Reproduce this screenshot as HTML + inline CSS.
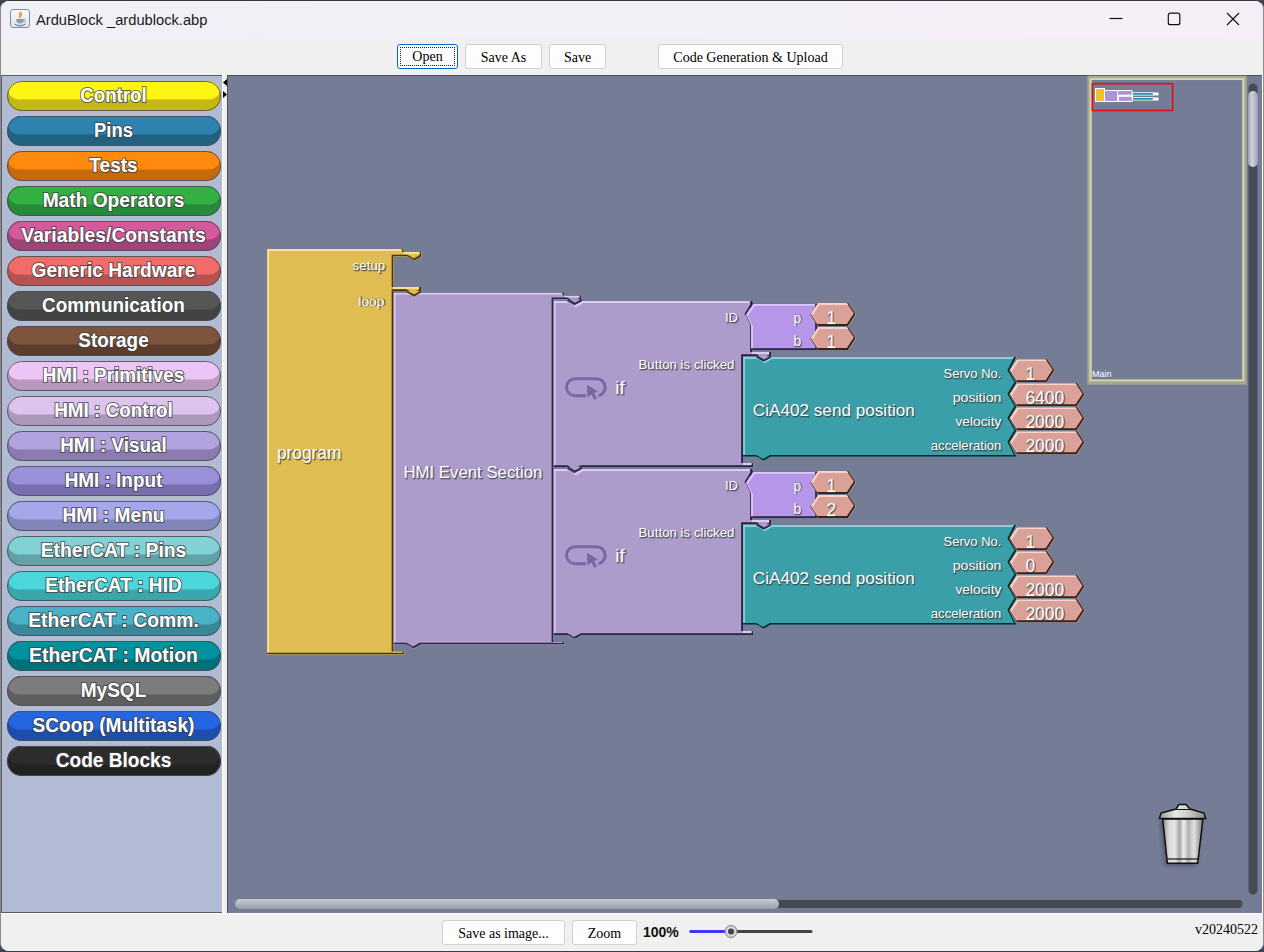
<!DOCTYPE html>
<html><head><meta charset="utf-8">
<style>
html,body{margin:0;padding:0;width:1264px;height:952px;overflow:hidden;background:#3e4453;}
*{box-sizing:border-box;}
.abs{position:absolute;}
.btn{position:absolute;background:#fdfdfd;border:1px solid #d0d0d0;border-radius:3px;font-family:'Liberation Serif',serif;font-size:14px;color:#000;text-align:center;}
</style></head><body>
<div class="abs" style="left:0;top:0;width:1264px;height:952px;border-radius:9px;background:#f0f0f0;border:1px solid #8c8c90;border-top-color:#34373f;border-bottom-color:#3a3e48;overflow:hidden;">
</div>
<!-- title bar -->
<div class="abs" style="left:1px;top:1px;width:1262px;height:37px;background:linear-gradient(90deg,#f1f0f6,#f3eff7 60%,#f5eef7);border-radius:8px 8px 0 0;"></div>
<div class="abs" style="left:36px;top:10.7px;font-family:'Liberation Sans',sans-serif;font-size:14.7px;color:#1a1a1a;line-height:18px;">ArduBlock _ardublock.abp</div>
<!-- java icon -->
<div class="abs" style="left:10px;top:9px;width:20px;height:19px;border:1px solid #7890a8;border-radius:3px;background:linear-gradient(#fafafa,#e4e4e4);"></div>
<svg class="abs" style="left:10px;top:9px" width="20" height="19" viewBox="0 0 20 19">
<path d="M10.5,2.5 C7.5,5 10.5,6.5 8.5,9.5 C12.5,8.5 13,5.5 10.5,2.5Z" fill="#f08a30"/><path d="M10.3,4.5 C9.5,6 10.8,7 9.6,8.6 C11.5,7.8 11.6,6 10.3,4.5Z" fill="#f8c040"/>
<path d="M6,10 H14 C14,13 12,14.5 10,14.5 C8,14.5 6,13 6,10Z" fill="#8a9cb0"/><path d="M14,10.5 C16,10.5 16,13 13.5,13.2" fill="none" stroke="#8a9cb0" stroke-width="1"/>
<path d="M4.5,15 Q10,18.5 15.5,15" fill="none" stroke="#7890a0" stroke-width="1.3"/>
</svg>
<!-- window buttons -->
<svg class="abs" style="left:1100px;top:5px" width="150" height="30">
<path d="M9.5,13.5 H22.5" stroke="#111" stroke-width="1.2"/>
<rect x="68.3" y="8.2" width="11.5" height="11.5" rx="2" fill="none" stroke="#111" stroke-width="1.2"/>
<path d="M127,8 L139,20 M139,8 L127,20" stroke="#111" stroke-width="1.2"/>
</svg>
<!-- toolbar -->
<div class="abs" style="left:1px;top:38px;width:1262px;height:37px;background:#f0f0f0;"></div>
<div class="btn" style="left:397px;top:44px;width:61px;height:25px;border:1px solid #0a64c8;line-height:24px;"><div style="position:absolute;left:2px;top:2px;right:2px;bottom:2px;border:1px dotted #222;"></div>Open</div>
<div class="btn" style="left:465px;top:44px;width:77px;height:25px;line-height:25px;">Save As</div>
<div class="btn" style="left:549px;top:44px;width:57px;height:25px;line-height:25px;">Save</div>
<div class="btn" style="left:658px;top:44px;width:185px;height:25px;line-height:25px;">Code Generation &amp; Upload</div>
<!-- sidebar -->
<div class="abs" style="left:1px;top:75px;width:222px;height:838px;background:#b1bbd4;border:1px solid #5c5c5c;border-right-color:#6a6a6a;"></div>
<div class="abs" style="left:222px;top:75px;width:5px;height:838px;background:#f0f0f0;border-left:1px solid #fff;"></div>
<svg class="abs" style="left:222px;top:78px" width="6" height="22"><path d="M5,1 L1,4.5 L5,8 Z" fill="#000"/><path d="M1,13 L5,16.5 L1,20 Z" fill="#000"/></svg>
<!-- canvas -->
<div class="abs" style="left:227px;top:75px;width:1035px;height:838px;background:#747c96;border-top:1px solid #4a4e5a;border-left:1px solid #4a4e5a;"></div>
<div class="abs" style="left:1262px;top:75px;width:1px;height:838px;background:#fff;"></div>
<!-- bottom bar -->
<div class="abs" style="left:1px;top:913px;width:1262px;height:38px;background:#f0f0f0;border-top:1px solid #fff;border-radius:0 0 8px 8px;"></div>
<div class="btn" style="left:442px;top:920px;width:123px;height:25px;line-height:25px;">Save as image...</div>
<div class="btn" style="left:572px;top:920px;width:65px;height:25px;line-height:25px;">Zoom</div>
<div class="abs" style="left:643px;top:923px;font-family:'Liberation Sans',sans-serif;font-weight:bold;font-size:14px;line-height:18px;color:#111;">100%</div>
<svg class="abs" style="left:685px;top:920px" width="135" height="25">
<path d="M6,11.5 H126" stroke="#444" stroke-width="3" stroke-linecap="round"/>
<path d="M6,11.5 H45" stroke="#3a3aff" stroke-width="3" stroke-linecap="round"/>
<circle cx="46" cy="11.5" r="6" fill="#d8d8d8" stroke="#808080" stroke-width="1"/>
<circle cx="46" cy="11.5" r="3" fill="#444"/>
</svg>
<div class="abs" style="left:1195px;top:921.3px;font-family:'Liberation Serif',serif;font-size:14px;line-height:18px;color:#000;">v20240522</div>

<svg class="abs" style="left:0;top:0" width="1264" height="952">
<defs><clipPath id="cb0"><rect x="7" y="81" width="214" height="30" rx="14" ry="15"/></clipPath>
<clipPath id="cb1"><rect x="7" y="116" width="214" height="30" rx="14" ry="15"/></clipPath>
<clipPath id="cb2"><rect x="7" y="151" width="214" height="30" rx="14" ry="15"/></clipPath>
<clipPath id="cb3"><rect x="7" y="186" width="214" height="30" rx="14" ry="15"/></clipPath>
<clipPath id="cb4"><rect x="7" y="221" width="214" height="30" rx="14" ry="15"/></clipPath>
<clipPath id="cb5"><rect x="7" y="256" width="214" height="30" rx="14" ry="15"/></clipPath>
<clipPath id="cb6"><rect x="7" y="291" width="214" height="30" rx="14" ry="15"/></clipPath>
<clipPath id="cb7"><rect x="7" y="326" width="214" height="30" rx="14" ry="15"/></clipPath>
<clipPath id="cb8"><rect x="7" y="361" width="214" height="30" rx="14" ry="15"/></clipPath>
<clipPath id="cb9"><rect x="7" y="396" width="214" height="30" rx="14" ry="15"/></clipPath>
<clipPath id="cb10"><rect x="7" y="431" width="214" height="30" rx="14" ry="15"/></clipPath>
<clipPath id="cb11"><rect x="7" y="466" width="214" height="30" rx="14" ry="15"/></clipPath>
<clipPath id="cb12"><rect x="7" y="501" width="214" height="30" rx="14" ry="15"/></clipPath>
<clipPath id="cb13"><rect x="7" y="536" width="214" height="30" rx="14" ry="15"/></clipPath>
<clipPath id="cb14"><rect x="7" y="571" width="214" height="30" rx="14" ry="15"/></clipPath>
<clipPath id="cb15"><rect x="7" y="606" width="214" height="30" rx="14" ry="15"/></clipPath>
<clipPath id="cb16"><rect x="7" y="641" width="214" height="30" rx="14" ry="15"/></clipPath>
<clipPath id="cb17"><rect x="7" y="676" width="214" height="30" rx="14" ry="15"/></clipPath>
<clipPath id="cb18"><rect x="7" y="711" width="214" height="30" rx="14" ry="15"/></clipPath>
<clipPath id="cb19"><rect x="7" y="746" width="214" height="30" rx="14" ry="15"/></clipPath>
<path id="bp1" d="M267,249 H403 L404,252 H421.5 V256.5 L415,260.5 L408,256.5 H393.5 V287 H421 V291 L414,295 L407,291 H393.5 V651.5 H404.5 V654.5 H267 Z"/><clipPath id="bc1"><path d="M267,249 H403 L404,252 H421.5 V256.5 L415,260.5 L408,256.5 H393.5 V287 H421 V291 L414,295 L407,291 H393.5 V651.5 H404.5 V654.5 H267 Z"/></clipPath>
<path id="bp2" d="M393.5,292.5 H563.5 L564.5,295.5 H581.5 V299.3 L575,303.3 L568,299.3 H553.5 V642 H564.5 V644.5 H421 L414,648.5 L407,644.5 H393.5 Z"/><clipPath id="bc2"><path d="M393.5,292.5 H563.5 L564.5,295.5 H581.5 V299.3 L575,303.3 L568,299.3 H553.5 V642 H564.5 V644.5 H421 L414,648.5 L407,644.5 H393.5 Z"/></clipPath>
<path id="bp3" d="M553.5,301 H568 L575,305 L582,301 H752 V352 H771 V356 L764,360 L757,356 H743 V463 H753.5 V467 H582 L575,471 L568,467 H553.5 Z"/><clipPath id="bc3"><path d="M553.5,301 H568 L575,305 L582,301 H752 V352 H771 V356 L764,360 L757,356 H743 V463 H753.5 V467 H582 L575,471 L568,467 H553.5 Z"/></clipPath>
<path id="bp4" d="M553.5,469 H568 L575,473 L582,469 H752 V520 H771 V524 L764,528 L757,524 H743 V631 H753.5 V635 H582 L575,639 L568,635 H553.5 Z"/><clipPath id="bc4"><path d="M553.5,469 H568 L575,473 L582,469 H752 V520 H771 V524 L764,528 L757,524 H743 V631 H753.5 V635 H582 L575,639 L568,635 H553.5 Z"/></clipPath>
<path id="bp5" d="M743,357 H757 L764,361 L771,357 H1016.5 L1009.4,371 L1016.5,383 L1009.4,395 L1016.5,407 L1009.4,419 L1016.5,431 L1009.4,443 L1016.5,456.8 H771 L764,461 L757,456.8 H743 Z"/><clipPath id="bc5"><path d="M743,357 H757 L764,361 L771,357 H1016.5 L1009.4,371 L1016.5,383 L1009.4,395 L1016.5,407 L1009.4,419 L1016.5,431 L1009.4,443 L1016.5,456.8 H771 L764,461 L757,456.8 H743 Z"/></clipPath>
<path id="bp6" d="M743,525 H757 L764,529 L771,525 H1016.5 L1009.4,539 L1016.5,551 L1009.4,563 L1016.5,575 L1009.4,587 L1016.5,599 L1009.4,611 L1016.5,624.8 H771 L764,629 L757,624.8 H743 Z"/><clipPath id="bc6"><path d="M743,525 H757 L764,529 L771,525 H1016.5 L1009.4,539 L1016.5,551 L1009.4,563 L1016.5,575 L1009.4,587 L1016.5,599 L1009.4,611 L1016.5,624.8 H771 L764,629 L757,624.8 H743 Z"/></clipPath>
<path id="bp7" d="M753.5,303.7 H817 V350 H751 V326 L745.5,314.7 Z"/><clipPath id="bc7"><path d="M753.5,303.7 H817 V350 H751 V326 L745.5,314.7 Z"/></clipPath>
<path id="bp8" d="M753.5,471.7 H817 V518 H751 V494 L745.5,482.7 Z"/><clipPath id="bc8"><path d="M753.5,471.7 H817 V518 H751 V494 L745.5,482.7 Z"/></clipPath>
<path id="bp9" d="M810.4,314.4 L817.9,302.9 H848.3 L855.8,314.4 L848.3,325.9 H817.9 Z"/><clipPath id="bc9"><path d="M810.4,314.4 L817.9,302.9 H848.3 L855.8,314.4 L848.3,325.9 H817.9 Z"/></clipPath>
<path id="bp10" d="M810.4,338.4 L817.9,326.9 H848.3 L855.8,338.4 L848.3,349.9 H817.9 Z"/><clipPath id="bc10"><path d="M810.4,338.4 L817.9,326.9 H848.3 L855.8,338.4 L848.3,349.9 H817.9 Z"/></clipPath>
<path id="bp11" d="M810.4,482.4 L817.9,470.9 H848.3 L855.8,482.4 L848.3,493.9 H817.9 Z"/><clipPath id="bc11"><path d="M810.4,482.4 L817.9,470.9 H848.3 L855.8,482.4 L848.3,493.9 H817.9 Z"/></clipPath>
<path id="bp12" d="M810.4,506.4 L817.9,494.9 H848.3 L855.8,506.4 L848.3,517.9 H817.9 Z"/><clipPath id="bc12"><path d="M810.4,506.4 L817.9,494.9 H848.3 L855.8,506.4 L848.3,517.9 H817.9 Z"/></clipPath>
<path id="bp13" d="M1009.4,370.6 L1016.9,359.1 H1047.0 L1054.5,370.6 L1047.0,382.1 H1016.9 Z"/><clipPath id="bc13"><path d="M1009.4,370.6 L1016.9,359.1 H1047.0 L1054.5,370.6 L1047.0,382.1 H1016.9 Z"/></clipPath>
<path id="bp14" d="M1009.4,394.6 L1016.9,383.1 H1077.0 L1084.5,394.6 L1077.0,406.1 H1016.9 Z"/><clipPath id="bc14"><path d="M1009.4,394.6 L1016.9,383.1 H1077.0 L1084.5,394.6 L1077.0,406.1 H1016.9 Z"/></clipPath>
<path id="bp15" d="M1009.4,418.6 L1016.9,407.1 H1077.0 L1084.5,418.6 L1077.0,430.1 H1016.9 Z"/><clipPath id="bc15"><path d="M1009.4,418.6 L1016.9,407.1 H1077.0 L1084.5,418.6 L1077.0,430.1 H1016.9 Z"/></clipPath>
<path id="bp16" d="M1009.4,442.6 L1016.9,431.1 H1077.0 L1084.5,442.6 L1077.0,454.1 H1016.9 Z"/><clipPath id="bc16"><path d="M1009.4,442.6 L1016.9,431.1 H1077.0 L1084.5,442.6 L1077.0,454.1 H1016.9 Z"/></clipPath>
<path id="bp17" d="M1009.4,538.6 L1016.9,527.1 H1047.0 L1054.5,538.6 L1047.0,550.1 H1016.9 Z"/><clipPath id="bc17"><path d="M1009.4,538.6 L1016.9,527.1 H1047.0 L1054.5,538.6 L1047.0,550.1 H1016.9 Z"/></clipPath>
<path id="bp18" d="M1009.4,562.6 L1016.9,551.1 H1047.0 L1054.5,562.6 L1047.0,574.1 H1016.9 Z"/><clipPath id="bc18"><path d="M1009.4,562.6 L1016.9,551.1 H1047.0 L1054.5,562.6 L1047.0,574.1 H1016.9 Z"/></clipPath>
<path id="bp19" d="M1009.4,586.6 L1016.9,575.1 H1077.0 L1084.5,586.6 L1077.0,598.1 H1016.9 Z"/><clipPath id="bc19"><path d="M1009.4,586.6 L1016.9,575.1 H1077.0 L1084.5,586.6 L1077.0,598.1 H1016.9 Z"/></clipPath>
<path id="bp20" d="M1009.4,610.6 L1016.9,599.1 H1077.0 L1084.5,610.6 L1077.0,622.1 H1016.9 Z"/><clipPath id="bc20"><path d="M1009.4,610.6 L1016.9,599.1 H1077.0 L1084.5,610.6 L1077.0,622.1 H1016.9 Z"/></clipPath>
<linearGradient id="thumbH" x1="0" y1="0" x2="0" y2="1"><stop offset="0" stop-color="#c8ccd6"/><stop offset="1" stop-color="#9a9eaa"/></linearGradient>
<linearGradient id="thumbV" x1="0" y1="0" x2="1" y2="0"><stop offset="0" stop-color="#9a9eaa"/><stop offset="0.4" stop-color="#d0d4de"/><stop offset="1" stop-color="#9a9eaa"/></linearGradient>
<linearGradient id="trash" x1="0" y1="0" x2="1" y2="0"><stop offset="0" stop-color="#8a8a8a"/><stop offset="0.15" stop-color="#d8d8d8"/><stop offset="0.3" stop-color="#e6e6e6"/><stop offset="0.42" stop-color="#a8a8a8"/><stop offset="0.52" stop-color="#eeeeee"/><stop offset="0.64" stop-color="#b0b0b0"/><stop offset="0.78" stop-color="#e2e2e2"/><stop offset="1" stop-color="#7a7a7a"/></linearGradient><linearGradient id="lid" x1="0" y1="0" x2="1" y2="0"><stop offset="0" stop-color="#9a9a9a"/><stop offset="0.35" stop-color="#e8e8e8"/><stop offset="0.6" stop-color="#d0d0d0"/><stop offset="1" stop-color="#8a8a8a"/></linearGradient><filter id="blur2" x="-50%" y="-50%" width="200%" height="200%"><feGaussianBlur stdDeviation="2"/></filter>
</defs>
<rect x="7" y="81" width="214" height="30" rx="14" ry="15" fill="#c4b814"/>
<g clip-path="url(#cb0)"><rect x="8" y="79" width="212" height="20.5" rx="11" ry="10.5" fill="#fff514"/></g>
<rect x="7.5" y="81.5" width="213" height="29" rx="14" ry="14.5" fill="none" stroke="#4c4c50" stroke-opacity="0.85" stroke-width="1"/>
<text x="113.5" y="102" text-anchor="middle" textLength="66.3" lengthAdjust="spacingAndGlyphs" style="font-family:'Liberation Sans',sans-serif;font-weight:bold;font-size:20px;paint-order:stroke;stroke:#404040;stroke-opacity:0.75;stroke-width:2.2px;fill:#fff">Control</text>
<rect x="7" y="116" width="214" height="30" rx="14" ry="15" fill="#22617f"/>
<g clip-path="url(#cb1)"><rect x="8" y="114" width="212" height="20.5" rx="11" ry="10.5" fill="#2e82b0"/></g>
<rect x="7.5" y="116.5" width="213" height="29" rx="14" ry="14.5" fill="none" stroke="#4c4c50" stroke-opacity="0.85" stroke-width="1"/>
<text x="113.5" y="137" text-anchor="middle" textLength="38.8" lengthAdjust="spacingAndGlyphs" style="font-family:'Liberation Sans',sans-serif;font-weight:bold;font-size:20px;paint-order:stroke;stroke:#404040;stroke-opacity:0.75;stroke-width:2.2px;fill:#fff">Pins</text>
<rect x="7" y="151" width="214" height="30" rx="14" ry="15" fill="#c66a0c"/>
<g clip-path="url(#cb2)"><rect x="8" y="149" width="212" height="20.5" rx="11" ry="10.5" fill="#ff8a0e"/></g>
<rect x="7.5" y="151.5" width="213" height="29" rx="14" ry="14.5" fill="none" stroke="#4c4c50" stroke-opacity="0.85" stroke-width="1"/>
<text x="113.5" y="172" text-anchor="middle" textLength="48.3" lengthAdjust="spacingAndGlyphs" style="font-family:'Liberation Sans',sans-serif;font-weight:bold;font-size:20px;paint-order:stroke;stroke:#404040;stroke-opacity:0.75;stroke-width:2.2px;fill:#fff">Tests</text>
<rect x="7" y="186" width="214" height="30" rx="14" ry="15" fill="#27893a"/>
<g clip-path="url(#cb3)"><rect x="8" y="184" width="212" height="20.5" rx="11" ry="10.5" fill="#32b042"/></g>
<rect x="7.5" y="186.5" width="213" height="29" rx="14" ry="14.5" fill="none" stroke="#4c4c50" stroke-opacity="0.85" stroke-width="1"/>
<text x="113.5" y="207" text-anchor="middle" textLength="141.7" lengthAdjust="spacingAndGlyphs" style="font-family:'Liberation Sans',sans-serif;font-weight:bold;font-size:20px;paint-order:stroke;stroke:#404040;stroke-opacity:0.75;stroke-width:2.2px;fill:#fff">Math Operators</text>
<rect x="7" y="221" width="214" height="30" rx="14" ry="15" fill="#9e4478"/>
<g clip-path="url(#cb4)"><rect x="8" y="219" width="212" height="20.5" rx="11" ry="10.5" fill="#d45a9c"/></g>
<rect x="7.5" y="221.5" width="213" height="29" rx="14" ry="14.5" fill="none" stroke="#4c4c50" stroke-opacity="0.85" stroke-width="1"/>
<text x="113.5" y="242" text-anchor="middle" textLength="184.3" lengthAdjust="spacingAndGlyphs" style="font-family:'Liberation Sans',sans-serif;font-weight:bold;font-size:20px;paint-order:stroke;stroke:#404040;stroke-opacity:0.75;stroke-width:2.2px;fill:#fff">Variables/Constants</text>
<rect x="7" y="256" width="214" height="30" rx="14" ry="15" fill="#b85250"/>
<g clip-path="url(#cb5)"><rect x="8" y="254" width="212" height="20.5" rx="11" ry="10.5" fill="#f06c6a"/></g>
<rect x="7.5" y="256.5" width="213" height="29" rx="14" ry="14.5" fill="none" stroke="#4c4c50" stroke-opacity="0.85" stroke-width="1"/>
<text x="113.5" y="277" text-anchor="middle" textLength="163.8" lengthAdjust="spacingAndGlyphs" style="font-family:'Liberation Sans',sans-serif;font-weight:bold;font-size:20px;paint-order:stroke;stroke:#404040;stroke-opacity:0.75;stroke-width:2.2px;fill:#fff">Generic Hardware</text>
<rect x="7" y="291" width="214" height="30" rx="14" ry="15" fill="#424444"/>
<g clip-path="url(#cb6)"><rect x="8" y="289" width="212" height="20.5" rx="11" ry="10.5" fill="#565656"/></g>
<rect x="7.5" y="291.5" width="213" height="29" rx="14" ry="14.5" fill="none" stroke="#4c4c50" stroke-opacity="0.85" stroke-width="1"/>
<text x="113.5" y="312" text-anchor="middle" textLength="142.8" lengthAdjust="spacingAndGlyphs" style="font-family:'Liberation Sans',sans-serif;font-weight:bold;font-size:20px;paint-order:stroke;stroke:#404040;stroke-opacity:0.75;stroke-width:2.2px;fill:#fff">Communication</text>
<rect x="7" y="326" width="214" height="30" rx="14" ry="15" fill="#5c3c2c"/>
<g clip-path="url(#cb7)"><rect x="8" y="324" width="212" height="20.5" rx="11" ry="10.5" fill="#7e543c"/></g>
<rect x="7.5" y="326.5" width="213" height="29" rx="14" ry="14.5" fill="none" stroke="#4c4c50" stroke-opacity="0.85" stroke-width="1"/>
<text x="113.5" y="347" text-anchor="middle" textLength="70.3" lengthAdjust="spacingAndGlyphs" style="font-family:'Liberation Sans',sans-serif;font-weight:bold;font-size:20px;paint-order:stroke;stroke:#404040;stroke-opacity:0.75;stroke-width:2.2px;fill:#fff">Storage</text>
<rect x="7" y="361" width="214" height="30" rx="14" ry="15" fill="#b898be"/>
<g clip-path="url(#cb8)"><rect x="8" y="359" width="212" height="20.5" rx="11" ry="10.5" fill="#ecc4f6"/></g>
<rect x="7.5" y="361.5" width="213" height="29" rx="14" ry="14.5" fill="none" stroke="#4c4c50" stroke-opacity="0.85" stroke-width="1"/>
<text x="113.5" y="382" text-anchor="middle" textLength="141.6" lengthAdjust="spacingAndGlyphs" style="font-family:'Liberation Sans',sans-serif;font-weight:bold;font-size:20px;paint-order:stroke;stroke:#404040;stroke-opacity:0.75;stroke-width:2.2px;fill:#fff">HMI : Primitives</text>
<rect x="7" y="396" width="214" height="30" rx="14" ry="15" fill="#ac98bc"/>
<g clip-path="url(#cb9)"><rect x="8" y="394" width="212" height="20.5" rx="11" ry="10.5" fill="#dcc4ee"/></g>
<rect x="7.5" y="396.5" width="213" height="29" rx="14" ry="14.5" fill="none" stroke="#4c4c50" stroke-opacity="0.85" stroke-width="1"/>
<text x="113.5" y="417" text-anchor="middle" textLength="118.6" lengthAdjust="spacingAndGlyphs" style="font-family:'Liberation Sans',sans-serif;font-weight:bold;font-size:20px;paint-order:stroke;stroke:#404040;stroke-opacity:0.75;stroke-width:2.2px;fill:#fff">HMI : Control</text>
<rect x="7" y="431" width="214" height="30" rx="14" ry="15" fill="#8a7cae"/>
<g clip-path="url(#cb10)"><rect x="8" y="429" width="212" height="20.5" rx="11" ry="10.5" fill="#b2a2de"/></g>
<rect x="7.5" y="431.5" width="213" height="29" rx="14" ry="14.5" fill="none" stroke="#4c4c50" stroke-opacity="0.85" stroke-width="1"/>
<text x="113.5" y="452" text-anchor="middle" textLength="106.5" lengthAdjust="spacingAndGlyphs" style="font-family:'Liberation Sans',sans-serif;font-weight:bold;font-size:20px;paint-order:stroke;stroke:#404040;stroke-opacity:0.75;stroke-width:2.2px;fill:#fff">HMI : Visual</text>
<rect x="7" y="466" width="214" height="30" rx="14" ry="15" fill="#7870ae"/>
<g clip-path="url(#cb11)"><rect x="8" y="464" width="212" height="20.5" rx="11" ry="10.5" fill="#9a90da"/></g>
<rect x="7.5" y="466.5" width="213" height="29" rx="14" ry="14.5" fill="none" stroke="#4c4c50" stroke-opacity="0.85" stroke-width="1"/>
<text x="113.5" y="487" text-anchor="middle" textLength="97.7" lengthAdjust="spacingAndGlyphs" style="font-family:'Liberation Sans',sans-serif;font-weight:bold;font-size:20px;paint-order:stroke;stroke:#404040;stroke-opacity:0.75;stroke-width:2.2px;fill:#fff">HMI : Input</text>
<rect x="7" y="501" width="214" height="30" rx="14" ry="15" fill="#8086ba"/>
<g clip-path="url(#cb12)"><rect x="8" y="499" width="212" height="20.5" rx="11" ry="10.5" fill="#a4a8ea"/></g>
<rect x="7.5" y="501.5" width="213" height="29" rx="14" ry="14.5" fill="none" stroke="#4c4c50" stroke-opacity="0.85" stroke-width="1"/>
<text x="113.5" y="522" text-anchor="middle" textLength="102" lengthAdjust="spacingAndGlyphs" style="font-family:'Liberation Sans',sans-serif;font-weight:bold;font-size:20px;paint-order:stroke;stroke:#404040;stroke-opacity:0.75;stroke-width:2.2px;fill:#fff">HMI : Menu</text>
<rect x="7" y="536" width="214" height="30" rx="14" ry="15" fill="#62a2a6"/>
<g clip-path="url(#cb13)"><rect x="8" y="534" width="212" height="20.5" rx="11" ry="10.5" fill="#80d2d6"/></g>
<rect x="7.5" y="536.5" width="213" height="29" rx="14" ry="14.5" fill="none" stroke="#4c4c50" stroke-opacity="0.85" stroke-width="1"/>
<text x="113.5" y="557" text-anchor="middle" textLength="145.7" lengthAdjust="spacingAndGlyphs" style="font-family:'Liberation Sans',sans-serif;font-weight:bold;font-size:20px;paint-order:stroke;stroke:#404040;stroke-opacity:0.75;stroke-width:2.2px;fill:#fff">EtherCAT : Pins</text>
<rect x="7" y="571" width="214" height="30" rx="14" ry="15" fill="#38a6aa"/>
<g clip-path="url(#cb14)"><rect x="8" y="569" width="212" height="20.5" rx="11" ry="10.5" fill="#4ad6da"/></g>
<rect x="7.5" y="571.5" width="213" height="29" rx="14" ry="14.5" fill="none" stroke="#4c4c50" stroke-opacity="0.85" stroke-width="1"/>
<text x="113.5" y="592" text-anchor="middle" textLength="136.6" lengthAdjust="spacingAndGlyphs" style="font-family:'Liberation Sans',sans-serif;font-weight:bold;font-size:20px;paint-order:stroke;stroke:#404040;stroke-opacity:0.75;stroke-width:2.2px;fill:#fff">EtherCAT : HID</text>
<rect x="7" y="606" width="214" height="30" rx="14" ry="15" fill="#38889a"/>
<g clip-path="url(#cb15)"><rect x="8" y="604" width="212" height="20.5" rx="11" ry="10.5" fill="#4ab2c6"/></g>
<rect x="7.5" y="606.5" width="213" height="29" rx="14" ry="14.5" fill="none" stroke="#4c4c50" stroke-opacity="0.85" stroke-width="1"/>
<text x="113.5" y="627" text-anchor="middle" textLength="170.6" lengthAdjust="spacingAndGlyphs" style="font-family:'Liberation Sans',sans-serif;font-weight:bold;font-size:20px;paint-order:stroke;stroke:#404040;stroke-opacity:0.75;stroke-width:2.2px;fill:#fff">EtherCAT : Comm.</text>
<rect x="7" y="641" width="214" height="30" rx="14" ry="15" fill="#00707a"/>
<g clip-path="url(#cb16)"><rect x="8" y="639" width="212" height="20.5" rx="11" ry="10.5" fill="#00929e"/></g>
<rect x="7.5" y="641.5" width="213" height="29" rx="14" ry="14.5" fill="none" stroke="#4c4c50" stroke-opacity="0.85" stroke-width="1"/>
<text x="113.5" y="662" text-anchor="middle" textLength="168.8" lengthAdjust="spacingAndGlyphs" style="font-family:'Liberation Sans',sans-serif;font-weight:bold;font-size:20px;paint-order:stroke;stroke:#404040;stroke-opacity:0.75;stroke-width:2.2px;fill:#fff">EtherCAT : Motion</text>
<rect x="7" y="676" width="214" height="30" rx="14" ry="15" fill="#5e5e5e"/>
<g clip-path="url(#cb17)"><rect x="8" y="674" width="212" height="20.5" rx="11" ry="10.5" fill="#7c7c7c"/></g>
<rect x="7.5" y="676.5" width="213" height="29" rx="14" ry="14.5" fill="none" stroke="#4c4c50" stroke-opacity="0.85" stroke-width="1"/>
<text x="113.5" y="697" text-anchor="middle" textLength="65.7" lengthAdjust="spacingAndGlyphs" style="font-family:'Liberation Sans',sans-serif;font-weight:bold;font-size:20px;paint-order:stroke;stroke:#404040;stroke-opacity:0.75;stroke-width:2.2px;fill:#fff">MySQL</text>
<rect x="7" y="711" width="214" height="30" rx="14" ry="15" fill="#1c4eae"/>
<g clip-path="url(#cb18)"><rect x="8" y="709" width="212" height="20.5" rx="11" ry="10.5" fill="#2466e2"/></g>
<rect x="7.5" y="711.5" width="213" height="29" rx="14" ry="14.5" fill="none" stroke="#4c4c50" stroke-opacity="0.85" stroke-width="1"/>
<text x="113.5" y="732" text-anchor="middle" textLength="161.8" lengthAdjust="spacingAndGlyphs" style="font-family:'Liberation Sans',sans-serif;font-weight:bold;font-size:20px;paint-order:stroke;stroke:#404040;stroke-opacity:0.75;stroke-width:2.2px;fill:#fff">SCoop (Multitask)</text>
<rect x="7" y="746" width="214" height="30" rx="14" ry="15" fill="#222222"/>
<g clip-path="url(#cb19)"><rect x="8" y="744" width="212" height="20.5" rx="11" ry="10.5" fill="#2c2c2c"/></g>
<rect x="7.5" y="746.5" width="213" height="29" rx="14" ry="14.5" fill="none" stroke="#4c4c50" stroke-opacity="0.85" stroke-width="1"/>
<text x="113.5" y="767" text-anchor="middle" textLength="115.5" lengthAdjust="spacingAndGlyphs" style="font-family:'Liberation Sans',sans-serif;font-weight:bold;font-size:20px;paint-order:stroke;stroke:#404040;stroke-opacity:0.75;stroke-width:2.2px;fill:#fff">Code Blocks</text>
<use href="#bp1" fill="#e0bd52"/>
<g clip-path="url(#bc1)"><use href="#bp1" transform="translate(1,1)" fill="none" stroke="#f6e296" stroke-width="2.0"/><use href="#bp1" transform="translate(-0.9,-0.9)" fill="none" stroke="#4a3404" stroke-width="1.9"/></g>
<use href="#bp2" fill="#ac9bcb"/>
<g clip-path="url(#bc2)"><use href="#bp2" transform="translate(1,1)" fill="none" stroke="#d8cdf0" stroke-width="2.0"/><use href="#bp2" transform="translate(-0.9,-0.9)" fill="none" stroke="#2c2244" stroke-width="1.9"/></g>
<use href="#bp3" fill="#ac9bcb"/>
<g clip-path="url(#bc3)"><use href="#bp3" transform="translate(1,1)" fill="none" stroke="#d8cdf0" stroke-width="2.0"/><use href="#bp3" transform="translate(-0.9,-0.9)" fill="none" stroke="#2c2244" stroke-width="1.9"/></g>
<use href="#bp4" fill="#ac9bcb"/>
<g clip-path="url(#bc4)"><use href="#bp4" transform="translate(1,1)" fill="none" stroke="#d8cdf0" stroke-width="2.0"/><use href="#bp4" transform="translate(-0.9,-0.9)" fill="none" stroke="#2c2244" stroke-width="1.9"/></g>
<use href="#bp5" fill="#3a9fa8"/>
<g clip-path="url(#bc5)"><use href="#bp5" transform="translate(1,1)" fill="none" stroke="#86d0d6" stroke-width="2.0"/><use href="#bp5" transform="translate(-0.9,-0.9)" fill="none" stroke="#062a2e" stroke-width="1.9"/></g>
<use href="#bp6" fill="#3a9fa8"/>
<g clip-path="url(#bc6)"><use href="#bp6" transform="translate(1,1)" fill="none" stroke="#86d0d6" stroke-width="2.0"/><use href="#bp6" transform="translate(-0.9,-0.9)" fill="none" stroke="#062a2e" stroke-width="1.9"/></g>
<use href="#bp7" fill="#b696e8"/>
<g clip-path="url(#bc7)"><use href="#bp7" transform="translate(1,1)" fill="none" stroke="#dcc8fc" stroke-width="2.0"/><use href="#bp7" transform="translate(-0.9,-0.9)" fill="none" stroke="#2c2244" stroke-width="1.9"/></g>
<path d="M752.5,302.5 L745,314.7" stroke="#2c2244" stroke-width="1.6"/>
<use href="#bp8" fill="#b696e8"/>
<g clip-path="url(#bc8)"><use href="#bp8" transform="translate(1,1)" fill="none" stroke="#dcc8fc" stroke-width="2.0"/><use href="#bp8" transform="translate(-0.9,-0.9)" fill="none" stroke="#2c2244" stroke-width="1.9"/></g>
<path d="M752.5,470.5 L745,482.7" stroke="#2c2244" stroke-width="1.6"/>
<use href="#bp9" fill="#d9a198"/>
<g clip-path="url(#bc9)"><use href="#bp9" transform="translate(1,1)" fill="none" stroke="#f8d4cc" stroke-width="2.0"/><use href="#bp9" transform="translate(-0.9,-0.9)" fill="none" stroke="#3e2016" stroke-width="1.9"/></g>
<text x="827.3" y="324.99999999999994" text-anchor="start" style="font-family:'Liberation Sans',sans-serif;font-size:17.5px;fill:#3a3a3a;fill-opacity:0.55;stroke:#3a3a3a;stroke-opacity:0.44000000000000006;stroke-width:1.2px">1</text>
<text x="826.4" y="324.09999999999997" text-anchor="start" style="font-family:'Liberation Sans',sans-serif;font-size:17.5px;fill:#fff">1</text>
<use href="#bp10" fill="#d9a198"/>
<g clip-path="url(#bc10)"><use href="#bp10" transform="translate(1,1)" fill="none" stroke="#f8d4cc" stroke-width="2.0"/><use href="#bp10" transform="translate(-0.9,-0.9)" fill="none" stroke="#3e2016" stroke-width="1.9"/></g>
<text x="827.3" y="348.99999999999994" text-anchor="start" style="font-family:'Liberation Sans',sans-serif;font-size:17.5px;fill:#3a3a3a;fill-opacity:0.55;stroke:#3a3a3a;stroke-opacity:0.44000000000000006;stroke-width:1.2px">1</text>
<text x="826.4" y="348.09999999999997" text-anchor="start" style="font-family:'Liberation Sans',sans-serif;font-size:17.5px;fill:#fff">1</text>
<use href="#bp11" fill="#d9a198"/>
<g clip-path="url(#bc11)"><use href="#bp11" transform="translate(1,1)" fill="none" stroke="#f8d4cc" stroke-width="2.0"/><use href="#bp11" transform="translate(-0.9,-0.9)" fill="none" stroke="#3e2016" stroke-width="1.9"/></g>
<text x="827.3" y="492.99999999999994" text-anchor="start" style="font-family:'Liberation Sans',sans-serif;font-size:17.5px;fill:#3a3a3a;fill-opacity:0.55;stroke:#3a3a3a;stroke-opacity:0.44000000000000006;stroke-width:1.2px">1</text>
<text x="826.4" y="492.09999999999997" text-anchor="start" style="font-family:'Liberation Sans',sans-serif;font-size:17.5px;fill:#fff">1</text>
<use href="#bp12" fill="#d9a198"/>
<g clip-path="url(#bc12)"><use href="#bp12" transform="translate(1,1)" fill="none" stroke="#f8d4cc" stroke-width="2.0"/><use href="#bp12" transform="translate(-0.9,-0.9)" fill="none" stroke="#3e2016" stroke-width="1.9"/></g>
<text x="827.3" y="517.0" text-anchor="start" style="font-family:'Liberation Sans',sans-serif;font-size:17.5px;fill:#3a3a3a;fill-opacity:0.55;stroke:#3a3a3a;stroke-opacity:0.44000000000000006;stroke-width:1.2px">2</text>
<text x="826.4" y="516.1" text-anchor="start" style="font-family:'Liberation Sans',sans-serif;font-size:17.5px;fill:#fff">2</text>
<use href="#bp13" fill="#d9a198"/>
<g clip-path="url(#bc13)"><use href="#bp13" transform="translate(1,1)" fill="none" stroke="#f8d4cc" stroke-width="2.0"/><use href="#bp13" transform="translate(-0.9,-0.9)" fill="none" stroke="#3e2016" stroke-width="1.9"/></g>
<text x="1026.3000000000002" y="381.2" text-anchor="start" style="font-family:'Liberation Sans',sans-serif;font-size:17.5px;fill:#3a3a3a;fill-opacity:0.55;stroke:#3a3a3a;stroke-opacity:0.44000000000000006;stroke-width:1.2px">1</text>
<text x="1025.4" y="380.3" text-anchor="start" style="font-family:'Liberation Sans',sans-serif;font-size:17.5px;fill:#fff">1</text>
<use href="#bp14" fill="#d9a198"/>
<g clip-path="url(#bc14)"><use href="#bp14" transform="translate(1,1)" fill="none" stroke="#f8d4cc" stroke-width="2.0"/><use href="#bp14" transform="translate(-0.9,-0.9)" fill="none" stroke="#3e2016" stroke-width="1.9"/></g>
<text x="1026.3000000000002" y="405.2" text-anchor="start" style="font-family:'Liberation Sans',sans-serif;font-size:17.5px;fill:#3a3a3a;fill-opacity:0.55;stroke:#3a3a3a;stroke-opacity:0.44000000000000006;stroke-width:1.2px">6400</text>
<text x="1025.4" y="404.3" text-anchor="start" style="font-family:'Liberation Sans',sans-serif;font-size:17.5px;fill:#fff">6400</text>
<use href="#bp15" fill="#d9a198"/>
<g clip-path="url(#bc15)"><use href="#bp15" transform="translate(1,1)" fill="none" stroke="#f8d4cc" stroke-width="2.0"/><use href="#bp15" transform="translate(-0.9,-0.9)" fill="none" stroke="#3e2016" stroke-width="1.9"/></g>
<text x="1026.3000000000002" y="429.2" text-anchor="start" style="font-family:'Liberation Sans',sans-serif;font-size:17.5px;fill:#3a3a3a;fill-opacity:0.55;stroke:#3a3a3a;stroke-opacity:0.44000000000000006;stroke-width:1.2px">2000</text>
<text x="1025.4" y="428.3" text-anchor="start" style="font-family:'Liberation Sans',sans-serif;font-size:17.5px;fill:#fff">2000</text>
<use href="#bp16" fill="#d9a198"/>
<g clip-path="url(#bc16)"><use href="#bp16" transform="translate(1,1)" fill="none" stroke="#f8d4cc" stroke-width="2.0"/><use href="#bp16" transform="translate(-0.9,-0.9)" fill="none" stroke="#3e2016" stroke-width="1.9"/></g>
<text x="1026.3000000000002" y="453.2" text-anchor="start" style="font-family:'Liberation Sans',sans-serif;font-size:17.5px;fill:#3a3a3a;fill-opacity:0.55;stroke:#3a3a3a;stroke-opacity:0.44000000000000006;stroke-width:1.2px">2000</text>
<text x="1025.4" y="452.3" text-anchor="start" style="font-family:'Liberation Sans',sans-serif;font-size:17.5px;fill:#fff">2000</text>
<use href="#bp17" fill="#d9a198"/>
<g clip-path="url(#bc17)"><use href="#bp17" transform="translate(1,1)" fill="none" stroke="#f8d4cc" stroke-width="2.0"/><use href="#bp17" transform="translate(-0.9,-0.9)" fill="none" stroke="#3e2016" stroke-width="1.9"/></g>
<text x="1026.3000000000002" y="549.2" text-anchor="start" style="font-family:'Liberation Sans',sans-serif;font-size:17.5px;fill:#3a3a3a;fill-opacity:0.55;stroke:#3a3a3a;stroke-opacity:0.44000000000000006;stroke-width:1.2px">1</text>
<text x="1025.4" y="548.3000000000001" text-anchor="start" style="font-family:'Liberation Sans',sans-serif;font-size:17.5px;fill:#fff">1</text>
<use href="#bp18" fill="#d9a198"/>
<g clip-path="url(#bc18)"><use href="#bp18" transform="translate(1,1)" fill="none" stroke="#f8d4cc" stroke-width="2.0"/><use href="#bp18" transform="translate(-0.9,-0.9)" fill="none" stroke="#3e2016" stroke-width="1.9"/></g>
<text x="1026.3000000000002" y="573.2" text-anchor="start" style="font-family:'Liberation Sans',sans-serif;font-size:17.5px;fill:#3a3a3a;fill-opacity:0.55;stroke:#3a3a3a;stroke-opacity:0.44000000000000006;stroke-width:1.2px">0</text>
<text x="1025.4" y="572.3000000000001" text-anchor="start" style="font-family:'Liberation Sans',sans-serif;font-size:17.5px;fill:#fff">0</text>
<use href="#bp19" fill="#d9a198"/>
<g clip-path="url(#bc19)"><use href="#bp19" transform="translate(1,1)" fill="none" stroke="#f8d4cc" stroke-width="2.0"/><use href="#bp19" transform="translate(-0.9,-0.9)" fill="none" stroke="#3e2016" stroke-width="1.9"/></g>
<text x="1026.3000000000002" y="597.2" text-anchor="start" style="font-family:'Liberation Sans',sans-serif;font-size:17.5px;fill:#3a3a3a;fill-opacity:0.55;stroke:#3a3a3a;stroke-opacity:0.44000000000000006;stroke-width:1.2px">2000</text>
<text x="1025.4" y="596.3000000000001" text-anchor="start" style="font-family:'Liberation Sans',sans-serif;font-size:17.5px;fill:#fff">2000</text>
<use href="#bp20" fill="#d9a198"/>
<g clip-path="url(#bc20)"><use href="#bp20" transform="translate(1,1)" fill="none" stroke="#f8d4cc" stroke-width="2.0"/><use href="#bp20" transform="translate(-0.9,-0.9)" fill="none" stroke="#3e2016" stroke-width="1.9"/></g>
<text x="1026.3000000000002" y="621.2" text-anchor="start" style="font-family:'Liberation Sans',sans-serif;font-size:17.5px;fill:#3a3a3a;fill-opacity:0.55;stroke:#3a3a3a;stroke-opacity:0.44000000000000006;stroke-width:1.2px">2000</text>
<text x="1025.4" y="620.3000000000001" text-anchor="start" style="font-family:'Liberation Sans',sans-serif;font-size:17.5px;fill:#fff">2000</text>
<path d="M407,291 H421 V291.5 L414,295.5 L407,291.5 Z" fill="#e0bd52"/>
<path d="M421,291.5 L414,295.5 L407,291.5" fill="none" stroke="#4a3404" stroke-width="1.6"/>
<path d="M568,299.3 H582 V299.8 L575,303.8 L568,299.8 Z" fill="#ac9bcb"/>
<path d="M582,299.8 L575,303.8 L568,299.8" fill="none" stroke="#2c2244" stroke-width="1.6"/>
<path d="M757,356 H771 V356.5 L764,360.5 L757,356.5 Z" fill="#ac9bcb"/>
<path d="M771,356.5 L764,360.5 L757,356.5" fill="none" stroke="#2c2244" stroke-width="1.6"/>
<path d="M757,524 H771 V524.5 L764,528.5 L757,524.5 Z" fill="#ac9bcb"/>
<path d="M771,524.5 L764,528.5 L757,524.5" fill="none" stroke="#2c2244" stroke-width="1.6"/>
<path d="M568,467 H582 V467.5 L575,471.5 L568,467.5 Z" fill="#ac9bcb"/>
<path d="M582,467.5 L575,471.5 L568,467.5" fill="none" stroke="#2c2244" stroke-width="1.6"/>
<text x="386.2" y="270.9" text-anchor="end" textLength="32.7" lengthAdjust="spacingAndGlyphs" style="font-family:'Liberation Sans',sans-serif;font-size:13.5px;fill:#3a3a3a;fill-opacity:0.55;stroke:#3a3a3a;stroke-opacity:0.44000000000000006;stroke-width:1.2px">setup</text>
<text x="385.3" y="270" text-anchor="end" textLength="32.7" lengthAdjust="spacingAndGlyphs" style="font-family:'Liberation Sans',sans-serif;font-size:13.5px;fill:#fff">setup</text>
<text x="385.5" y="306.4" text-anchor="end" textLength="26.3" lengthAdjust="spacingAndGlyphs" style="font-family:'Liberation Sans',sans-serif;font-size:13.5px;fill:#3a3a3a;fill-opacity:0.55;stroke:#3a3a3a;stroke-opacity:0.44000000000000006;stroke-width:1.2px">loop</text>
<text x="384.6" y="305.5" text-anchor="end" textLength="26.3" lengthAdjust="spacingAndGlyphs" style="font-family:'Liberation Sans',sans-serif;font-size:13.5px;fill:#fff">loop</text>
<text x="277.79999999999995" y="459.79999999999995" text-anchor="start" textLength="64.5" lengthAdjust="spacingAndGlyphs" style="font-family:'Liberation Sans',sans-serif;font-size:17.7px;fill:#3a3a3a;fill-opacity:0.55;stroke:#3a3a3a;stroke-opacity:0.44000000000000006;stroke-width:1.2px">program</text>
<text x="276.9" y="458.9" text-anchor="start" textLength="64.5" lengthAdjust="spacingAndGlyphs" style="font-family:'Liberation Sans',sans-serif;font-size:17.7px;fill:#fff">program</text>
<text x="404.29999999999995" y="478.7" text-anchor="start" textLength="139" lengthAdjust="spacingAndGlyphs" style="font-family:'Liberation Sans',sans-serif;font-size:16.5px;fill:#3a3a3a;fill-opacity:0.55;stroke:#3a3a3a;stroke-opacity:0.44000000000000006;stroke-width:1.2px">HMI Event Section</text>
<text x="403.4" y="477.8" text-anchor="start" textLength="139" lengthAdjust="spacingAndGlyphs" style="font-family:'Liberation Sans',sans-serif;font-size:16.5px;fill:#fff">HMI Event Section</text>
<path d="M586,395.8 H575 A8.5,8.5 0 0 1 575,378.8 H597 A8.5,8.5 0 0 1 598.5,395.6" fill="none" stroke="#7866a8" stroke-width="3"/>
<path d="M587,385 L598,391.5 L594,393 L597,398.5 L594.5,400 L591.5,394.5 L587.5,397.5 Z" fill="#7866a8"/>
<text x="616.1999999999999" y="394.9" text-anchor="start" style="font-family:'Liberation Sans',sans-serif;font-size:19px;fill:#3a3a3a;fill-opacity:0.55;stroke:#3a3a3a;stroke-opacity:0.44000000000000006;stroke-width:1.2px">if</text>
<text x="615.3" y="394" text-anchor="start" style="font-family:'Liberation Sans',sans-serif;font-size:19px;fill:#fff">if</text>
<text x="735.4" y="369.9" text-anchor="end" textLength="96" lengthAdjust="spacingAndGlyphs" style="font-family:'Liberation Sans',sans-serif;font-size:13.4px;fill:#3a3a3a;fill-opacity:0.55;stroke:#3a3a3a;stroke-opacity:0.44000000000000006;stroke-width:1.2px">Button is clicked</text>
<text x="734.5" y="369" text-anchor="end" textLength="96" lengthAdjust="spacingAndGlyphs" style="font-family:'Liberation Sans',sans-serif;font-size:13.4px;fill:#fff">Button is clicked</text>
<text x="738.9" y="322.9" text-anchor="end" textLength="13" lengthAdjust="spacingAndGlyphs" style="font-family:'Liberation Sans',sans-serif;font-size:13.5px;fill:#3a3a3a;fill-opacity:0.55;stroke:#3a3a3a;stroke-opacity:0.44000000000000006;stroke-width:1.2px">ID</text>
<text x="738" y="322" text-anchor="end" textLength="13" lengthAdjust="spacingAndGlyphs" style="font-family:'Liberation Sans',sans-serif;font-size:13.5px;fill:#fff">ID</text>
<text x="802.1" y="323.4" text-anchor="end" style="font-family:'Liberation Sans',sans-serif;font-size:14px;fill:#3a3a3a;fill-opacity:0.55;stroke:#3a3a3a;stroke-opacity:0.44000000000000006;stroke-width:1.2px">p</text>
<text x="801.2" y="322.5" text-anchor="end" style="font-family:'Liberation Sans',sans-serif;font-size:14px;fill:#fff">p</text>
<text x="802.1" y="346.9" text-anchor="end" style="font-family:'Liberation Sans',sans-serif;font-size:14px;fill:#3a3a3a;fill-opacity:0.55;stroke:#3a3a3a;stroke-opacity:0.44000000000000006;stroke-width:1.2px">b</text>
<text x="801.2" y="346" text-anchor="end" style="font-family:'Liberation Sans',sans-serif;font-size:14px;fill:#fff">b</text>
<text x="753.6999999999999" y="416.5" text-anchor="start" textLength="162" lengthAdjust="spacingAndGlyphs" style="font-family:'Liberation Sans',sans-serif;font-size:17px;fill:#3a3a3a;fill-opacity:0.55;stroke:#3a3a3a;stroke-opacity:0.44000000000000006;stroke-width:1.2px">CiA402 send position</text>
<text x="752.8" y="415.6" text-anchor="start" textLength="162" lengthAdjust="spacingAndGlyphs" style="font-family:'Liberation Sans',sans-serif;font-size:17px;fill:#fff">CiA402 send position</text>
<text x="1002.3" y="378.79999999999995" text-anchor="end" textLength="57.9" lengthAdjust="spacingAndGlyphs" style="font-family:'Liberation Sans',sans-serif;font-size:13.2px;fill:#3a3a3a;fill-opacity:0.55;stroke:#3a3a3a;stroke-opacity:0.44000000000000006;stroke-width:1.2px">Servo No.</text>
<text x="1001.4" y="377.9" text-anchor="end" textLength="57.9" lengthAdjust="spacingAndGlyphs" style="font-family:'Liberation Sans',sans-serif;font-size:13.2px;fill:#fff">Servo No.</text>
<text x="1002.3" y="402.79999999999995" text-anchor="end" textLength="48.7" lengthAdjust="spacingAndGlyphs" style="font-family:'Liberation Sans',sans-serif;font-size:13.2px;fill:#3a3a3a;fill-opacity:0.55;stroke:#3a3a3a;stroke-opacity:0.44000000000000006;stroke-width:1.2px">position</text>
<text x="1001.4" y="401.9" text-anchor="end" textLength="48.7" lengthAdjust="spacingAndGlyphs" style="font-family:'Liberation Sans',sans-serif;font-size:13.2px;fill:#fff">position</text>
<text x="1002.3" y="426.79999999999995" text-anchor="end" textLength="46" lengthAdjust="spacingAndGlyphs" style="font-family:'Liberation Sans',sans-serif;font-size:13.2px;fill:#3a3a3a;fill-opacity:0.55;stroke:#3a3a3a;stroke-opacity:0.44000000000000006;stroke-width:1.2px">velocity</text>
<text x="1001.4" y="425.9" text-anchor="end" textLength="46" lengthAdjust="spacingAndGlyphs" style="font-family:'Liberation Sans',sans-serif;font-size:13.2px;fill:#fff">velocity</text>
<text x="1002.3" y="450.79999999999995" text-anchor="end" textLength="70.6" lengthAdjust="spacingAndGlyphs" style="font-family:'Liberation Sans',sans-serif;font-size:13.2px;fill:#3a3a3a;fill-opacity:0.55;stroke:#3a3a3a;stroke-opacity:0.44000000000000006;stroke-width:1.2px">acceleration</text>
<text x="1001.4" y="449.9" text-anchor="end" textLength="70.6" lengthAdjust="spacingAndGlyphs" style="font-family:'Liberation Sans',sans-serif;font-size:13.2px;fill:#fff">acceleration</text>
<path d="M586,563.8 H575 A8.5,8.5 0 0 1 575,546.8 H597 A8.5,8.5 0 0 1 598.5,563.6" fill="none" stroke="#7866a8" stroke-width="3"/>
<path d="M587,553 L598,559.5 L594,561 L597,566.5 L594.5,568 L591.5,562.5 L587.5,565.5 Z" fill="#7866a8"/>
<text x="616.1999999999999" y="562.9" text-anchor="start" style="font-family:'Liberation Sans',sans-serif;font-size:19px;fill:#3a3a3a;fill-opacity:0.55;stroke:#3a3a3a;stroke-opacity:0.44000000000000006;stroke-width:1.2px">if</text>
<text x="615.3" y="562" text-anchor="start" style="font-family:'Liberation Sans',sans-serif;font-size:19px;fill:#fff">if</text>
<text x="735.4" y="537.9" text-anchor="end" textLength="96" lengthAdjust="spacingAndGlyphs" style="font-family:'Liberation Sans',sans-serif;font-size:13.4px;fill:#3a3a3a;fill-opacity:0.55;stroke:#3a3a3a;stroke-opacity:0.44000000000000006;stroke-width:1.2px">Button is clicked</text>
<text x="734.5" y="537" text-anchor="end" textLength="96" lengthAdjust="spacingAndGlyphs" style="font-family:'Liberation Sans',sans-serif;font-size:13.4px;fill:#fff">Button is clicked</text>
<text x="738.9" y="490.9" text-anchor="end" textLength="13" lengthAdjust="spacingAndGlyphs" style="font-family:'Liberation Sans',sans-serif;font-size:13.5px;fill:#3a3a3a;fill-opacity:0.55;stroke:#3a3a3a;stroke-opacity:0.44000000000000006;stroke-width:1.2px">ID</text>
<text x="738" y="490" text-anchor="end" textLength="13" lengthAdjust="spacingAndGlyphs" style="font-family:'Liberation Sans',sans-serif;font-size:13.5px;fill:#fff">ID</text>
<text x="802.1" y="491.4" text-anchor="end" style="font-family:'Liberation Sans',sans-serif;font-size:14px;fill:#3a3a3a;fill-opacity:0.55;stroke:#3a3a3a;stroke-opacity:0.44000000000000006;stroke-width:1.2px">p</text>
<text x="801.2" y="490.5" text-anchor="end" style="font-family:'Liberation Sans',sans-serif;font-size:14px;fill:#fff">p</text>
<text x="802.1" y="514.9" text-anchor="end" style="font-family:'Liberation Sans',sans-serif;font-size:14px;fill:#3a3a3a;fill-opacity:0.55;stroke:#3a3a3a;stroke-opacity:0.44000000000000006;stroke-width:1.2px">b</text>
<text x="801.2" y="514" text-anchor="end" style="font-family:'Liberation Sans',sans-serif;font-size:14px;fill:#fff">b</text>
<text x="753.6999999999999" y="584.5" text-anchor="start" textLength="162" lengthAdjust="spacingAndGlyphs" style="font-family:'Liberation Sans',sans-serif;font-size:17px;fill:#3a3a3a;fill-opacity:0.55;stroke:#3a3a3a;stroke-opacity:0.44000000000000006;stroke-width:1.2px">CiA402 send position</text>
<text x="752.8" y="583.6" text-anchor="start" textLength="162" lengthAdjust="spacingAndGlyphs" style="font-family:'Liberation Sans',sans-serif;font-size:17px;fill:#fff">CiA402 send position</text>
<text x="1002.3" y="546.8" text-anchor="end" textLength="57.9" lengthAdjust="spacingAndGlyphs" style="font-family:'Liberation Sans',sans-serif;font-size:13.2px;fill:#3a3a3a;fill-opacity:0.55;stroke:#3a3a3a;stroke-opacity:0.44000000000000006;stroke-width:1.2px">Servo No.</text>
<text x="1001.4" y="545.9" text-anchor="end" textLength="57.9" lengthAdjust="spacingAndGlyphs" style="font-family:'Liberation Sans',sans-serif;font-size:13.2px;fill:#fff">Servo No.</text>
<text x="1002.3" y="570.8" text-anchor="end" textLength="48.7" lengthAdjust="spacingAndGlyphs" style="font-family:'Liberation Sans',sans-serif;font-size:13.2px;fill:#3a3a3a;fill-opacity:0.55;stroke:#3a3a3a;stroke-opacity:0.44000000000000006;stroke-width:1.2px">position</text>
<text x="1001.4" y="569.9" text-anchor="end" textLength="48.7" lengthAdjust="spacingAndGlyphs" style="font-family:'Liberation Sans',sans-serif;font-size:13.2px;fill:#fff">position</text>
<text x="1002.3" y="594.8" text-anchor="end" textLength="46" lengthAdjust="spacingAndGlyphs" style="font-family:'Liberation Sans',sans-serif;font-size:13.2px;fill:#3a3a3a;fill-opacity:0.55;stroke:#3a3a3a;stroke-opacity:0.44000000000000006;stroke-width:1.2px">velocity</text>
<text x="1001.4" y="593.9" text-anchor="end" textLength="46" lengthAdjust="spacingAndGlyphs" style="font-family:'Liberation Sans',sans-serif;font-size:13.2px;fill:#fff">velocity</text>
<text x="1002.3" y="618.8" text-anchor="end" textLength="70.6" lengthAdjust="spacingAndGlyphs" style="font-family:'Liberation Sans',sans-serif;font-size:13.2px;fill:#3a3a3a;fill-opacity:0.55;stroke:#3a3a3a;stroke-opacity:0.44000000000000006;stroke-width:1.2px">acceleration</text>
<text x="1001.4" y="617.9" text-anchor="end" textLength="70.6" lengthAdjust="spacingAndGlyphs" style="font-family:'Liberation Sans',sans-serif;font-size:13.2px;fill:#fff">acceleration</text>
<!-- minimap -->
<rect x="1089.45" y="77.85" width="155.1" height="304.7" fill="none" stroke="#a6a78e" stroke-width="4.3"/>
<rect x="1090.2" y="78.6" width="153.6" height="301.8" fill="none" stroke="#c2c29e" stroke-width="2"/>
<rect x="1091" y="79.4" width="152" height="301" fill="none" stroke="#d8d8ac" stroke-width="1.3"/>
<rect x="1092.4" y="83.7" width="80.2" height="26.8" fill="none" stroke="#e01010" stroke-width="1.6"/>
<path d="M1095,88 H1105 V90 H1132.5 V92.2 H1153.5 V92.5 H1158.5 V95.5 H1133 V97.2 H1153.5 V97.5 H1158.5 V100.5 H1132.5 V102 H1095 Z" fill="#fff"/>
<rect x="1096" y="89" width="8" height="12" fill="#f0c030"/>
<rect x="1105" y="91" width="12.2" height="10" fill="#ac94d4"/>
<rect x="1118.2" y="91" width="13.5" height="3.7" fill="#ac94d4"/>
<rect x="1119" y="96.8" width="12.7" height="4.1" fill="#ac94d4"/>
<rect x="1133" y="93" width="19.8" height="1.8" fill="#1aa0a8"/>
<rect x="1133" y="98" width="19.8" height="1.8" fill="#1aa0a8"/>
<text x="1092" y="377" style="font-family:'Liberation Sans',sans-serif;font-size:9px;fill:#fff">Main</text>
<!-- scrollbars -->
<rect x="1248.5" y="83.5" width="9" height="811" rx="4.5" fill="#454a55"/>
<rect x="1248" y="91" width="10" height="76" rx="5" fill="url(#thumbV)"/>
<rect x="235" y="899.5" width="1008" height="9" rx="4.5" fill="#454a55" stroke="#8a8a80" stroke-width="0.6"/>
<rect x="235" y="899" width="544" height="10" rx="5" fill="url(#thumbH)"/>
<!-- trash -->
<path d="M1160.7,821 L1200.9,821 L1195.7,865.3 L1165.4,865.3 Z" fill="#202030" opacity="0.5" filter="url(#blur2)"/>
<path d="M1162.7,819 L1202.9,819 L1197.7,863.3 L1167.4,863.3 Z" fill="url(#trash)" stroke="#111" stroke-width="1.5"/>
<path d="M1167,859 H1198" stroke="#111" stroke-width="1.2"/>
<path d="M1159.4,818.5 L1161,813 L1176,809 L1179,804.5 H1186 L1190,809 L1204,813 L1205.7,818.5 Z" fill="url(#lid)" stroke="#111" stroke-width="1.5"/>
<path d="M1176,809.5 H1190" stroke="#111" stroke-width="1"/>
</svg>
</body></html>
